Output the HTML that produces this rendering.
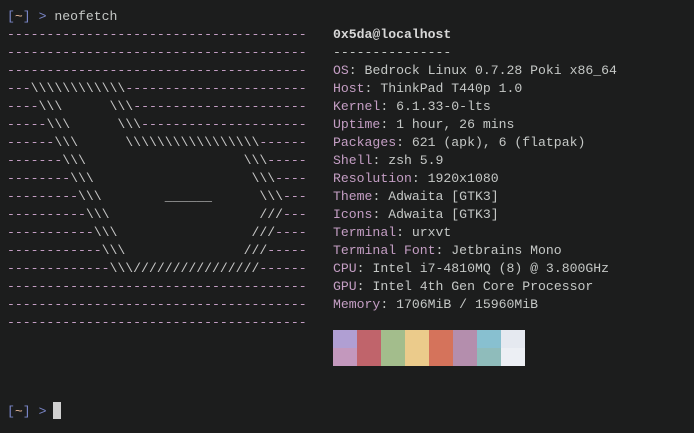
<!DOCTYPE html>
<html><head><style>
html,body{margin:0;padding:0;background:#1c1d1d;width:694px;height:433px;overflow:hidden}
pre{margin:0;position:absolute;font-family:"Liberation Mono",monospace;font-size:13.15px;line-height:18px;color:#c5c8c6;white-space:pre}
.d{color:#c49ec4}.w{color:#c6c6c6}
.b{color:#7a86c8}.t{color:#e8b898}
.k{color:#c49ec4}
.u{color:#d8d8d8;font-weight:bold}
.sw{position:absolute;width:24px;height:18px}
</style></head><body>
<pre style="left:7px;top:8px"><span class="b">[</span><span class="t">~</span><span class="b">]</span> <span class="b">&gt;</span> neofetch</pre>
<pre style="left:7px;top:26px"><span class="d">--------------------------------------
--------------------------------------
--------------------------------------
---</span><span class="w">\\\\\\\\\\\\</span><span class="d">-----------------------
----</span><span class="w">\\\      \\\</span><span class="d">----------------------
-----</span><span class="w">\\\      \\\</span><span class="d">---------------------
------</span><span class="w">\\\      \\\\\\\\\\\\\\\\\</span><span class="d">------
-------</span><span class="w">\\\                    \\\</span><span class="d">-----
--------</span><span class="w">\\\                    \\\</span><span class="d">----
---------</span><span class="w">\\\        ______      \\\</span><span class="d">---
----------</span><span class="w">\\\                   ///</span><span class="d">---
-----------</span><span class="w">\\\                 ///</span><span class="d">----
------------</span><span class="w">\\\               ///</span><span class="d">-----
-------------</span><span class="w">\\\////////////////</span><span class="d">------
--------------------------------------
--------------------------------------
--------------------------------------</span></pre>
<pre style="left:333px;top:26px"><span class="u">0x5da@localhost</span>
---------------
<span class="k">OS</span>: Bedrock Linux 0.7.28 Poki x86_64
<span class="k">Host</span>: ThinkPad T440p 1.0
<span class="k">Kernel</span>: 6.1.33-0-lts
<span class="k">Uptime</span>: 1 hour, 26 mins
<span class="k">Packages</span>: 621 (apk), 6 (flatpak)
<span class="k">Shell</span>: zsh 5.9
<span class="k">Resolution</span>: 1920x1080
<span class="k">Theme</span>: Adwaita [GTK3]
<span class="k">Icons</span>: Adwaita [GTK3]
<span class="k">Terminal</span>: urxvt
<span class="k">Terminal Font</span>: Jetbrains Mono
<span class="k">CPU</span>: Intel i7-4810MQ (8) @ 3.800GHz
<span class="k">GPU</span>: Intel 4th Gen Core Processor
<span class="k">Memory</span>: 1706MiB / 15960MiB</pre>
<div class="sw" style="left:333px;top:330px;background:#b09fd3"></div>
<div class="sw" style="left:357px;top:330px;background:#c0646b"></div>
<div class="sw" style="left:381px;top:330px;background:#a3bd8c"></div>
<div class="sw" style="left:405px;top:330px;background:#ebcb8b"></div>
<div class="sw" style="left:429px;top:330px;background:#d5735b"></div>
<div class="sw" style="left:453px;top:330px;background:#b48ead"></div>
<div class="sw" style="left:477px;top:330px;background:#88c0d0"></div>
<div class="sw" style="left:501px;top:330px;background:#e5e9f0"></div>
<div class="sw" style="left:333px;top:348px;background:#c398bd"></div>
<div class="sw" style="left:357px;top:348px;background:#c0646b"></div>
<div class="sw" style="left:381px;top:348px;background:#a3bd8c"></div>
<div class="sw" style="left:405px;top:348px;background:#ebcb8b"></div>
<div class="sw" style="left:429px;top:348px;background:#d5735b"></div>
<div class="sw" style="left:453px;top:348px;background:#b48ead"></div>
<div class="sw" style="left:477px;top:348px;background:#8fbcbb"></div>
<div class="sw" style="left:501px;top:348px;background:#eceff4"></div>
<pre style="left:7px;top:403px"><span class="b">[</span><span class="t">~</span><span class="b">]</span> <span class="b">&gt;</span></pre>
<div style="position:absolute;left:53px;top:402px;width:8px;height:17px;background:#d0d0d0"></div>
</body></html>
